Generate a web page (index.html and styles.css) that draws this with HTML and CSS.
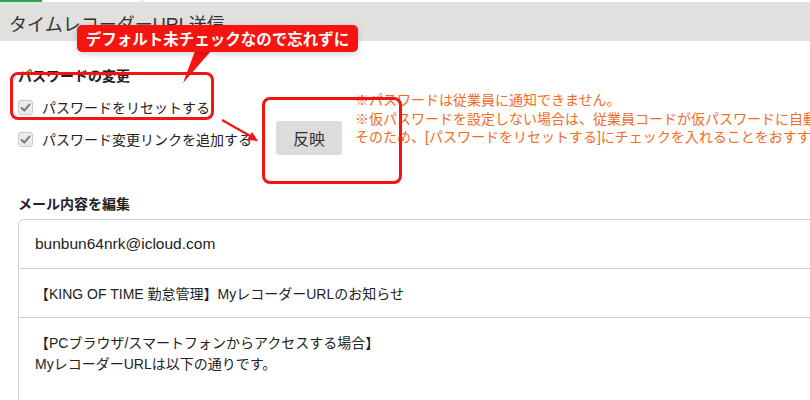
FILE: index.html
```html
<!DOCTYPE html>
<html lang="ja">
<head>
<meta charset="utf-8">
<title>タイムレコーダーURL送信</title>
<link rel="stylesheet" href="styles.css">
</head>
<body>
<div class="page">
  <div class="topstrip"><span class="tab-green"></span><span class="tab-white"></span></div>
  <div class="header"><h1 class="title">タイムレコーダーURL送信</h1></div>
  <div class="content">
    <div class="sec-title">パスワードの変更</div>
    <div class="pw-row">
      <div class="options">
        <label class="opt"><span class="cb"><svg viewBox="0 0 15 15" width="15" height="15"><path d="M3.6 7.9 L6.3 10.6 L11.4 4.6" fill="none" stroke="#7b7b7b" stroke-width="2.1" stroke-linecap="round" stroke-linejoin="round"/></svg></span>パスワードをリセットする</label>
        <label class="opt"><span class="cb"><svg viewBox="0 0 15 15" width="15" height="15"><path d="M3.6 7.9 L6.3 10.6 L11.4 4.6" fill="none" stroke="#7b7b7b" stroke-width="2.1" stroke-linecap="round" stroke-linejoin="round"/></svg></span>パスワード変更リンクを追加する</label>
      </div>
      <button class="btn">反映</button>
      <div class="notes">
        <div>※パスワードは従業員に通知できません。</div>
        <div>※仮パスワードを設定しない場合は、従業員コードが仮パスワードに自動で設定されます。</div>
        <div>そのため、[パスワードをリセットする]にチェックを入れることをおすすめします。</div>
      </div>
    </div>
    <div class="sec-title mail-title">メール内容を編集</div>
    <div class="mailbox">
      <div class="mrow"><span class="latin">bunbun64nrk@icloud.com</span></div>
      <div class="mrow br">【KING OF TIME 勤怠管理】MyレコーダーURLのお知らせ</div>
      <div class="mbody br">【PCブラウザ/スマートフォンからアクセスする場合】<br>MyレコーダーURLは以下の通りです。</div>
    </div>
  </div>

  <div class="redbox box1"></div>
  <div class="redbox box2"></div>
  <svg class="overlay" width="810" height="400" viewBox="0 0 810 400">
    <polygon points="195,51 211,51 183,83" fill="#f5140f"/>
    <line x1="222" y1="120" x2="252" y2="137" stroke="#f5140f" stroke-width="2.2"/>
    <polygon points="258,141 247,140 252,132" fill="#f5140f"/>
  </svg>
  <div class="callout">デフォルト未チェックなので忘れずに</div>
</div>
</body>
</html>
```

FILE: styles.css
```css
html, body {
  margin: 0;
  padding: 0;
  background: #fff;
}
body {
  font-family: "Liberation Sans", "Noto Sans CJK JP", sans-serif;
  color: #333;
  overflow: hidden;
}
.page {
  position: relative;
  width: 810px;
  height: 400px;
  overflow: hidden;
}
.topstrip {
  display: flex;
  height: 2px;
  background: #fff;
}
.tab-green {
  width: 42px;
  background: #2ea44f;
}
.tab-white {
  width: 100px;
  border-right: 1px solid #c8c8c8;
}
.header {
  height: 39px;
  background: #e0e0de;
  display: flex;
  align-items: center;
}
.title {
  margin: 0;
  padding: 2px 0 0 9px;
  font-size: 18px;
  font-weight: normal;
  color: #333;
}
.content {
  padding-left: 18px;
}
.sec-title {
  margin-top: 25px;
  font-size: 14px;
  line-height: 20px;
  font-weight: bold;
  color: #222;
}
.pw-row {
  display: flex;
  align-items: flex-start;
  margin-top: 5px;
}
.options {
  flex: none;
  width: 258px;
  display: flex;
  flex-direction: column;
}
.opt {
  display: flex;
  align-items: center;
  height: 32px;
  font-size: 14px;
  color: #222;
  white-space: nowrap;
}
.cb {
  flex: none;
  width: 15px;
  height: 15px;
  box-sizing: border-box;
  border: 1px solid #c9c9c9;
  border-radius: 3px;
  background: #ececec;
  margin-right: 9px;
  position: relative;
  display: flex;
}
.cb svg {
  position: absolute;
  left: -1px;
  top: -1px;
}
.btn {
  flex: none;
  margin-top: 30px;
  width: 66px;
  height: 34px;
  border: none;
  border-radius: 3px;
  background: #dcdcdc;
  color: #333;
  font-family: "Noto Sans CJK JP", sans-serif;
  font-size: 16px;
  padding: 0;
}
.notes {
  flex: none;
  margin-left: 13px;
  font-size: 14px;
  line-height: 18.5px;
  color: #f36b1f;
  white-space: nowrap;
}
.mail-title {
  margin-top: 39px;
}
.mailbox {
  margin-top: 5px;
  width: 820px;
  border: 1px solid #cfcfcf;
  border-top-left-radius: 6px;
  font-size: 14px;
  color: #222;
}
.mrow {
  height: 48px;
  display: flex;
  align-items: center;
  padding-left: 16px;
  white-space: nowrap;
}
.latin {
  font-size: 15.5px;
}
.br {
  border-top: 1px solid #cfcfcf;
}
.mbody {
  padding: 15px 0 40px 16px;
  line-height: 21px;
  white-space: nowrap;
}
.redbox {
  position: absolute;
  border: 3px solid #f5140f;
  border-radius: 8px;
  box-sizing: border-box;
}
.box1 {
  left: 10px;
  top: 72px;
  width: 204px;
  height: 48px;
}
.box2 {
  left: 262px;
  top: 97px;
  width: 140px;
  height: 87px;
}
.overlay {
  position: absolute;
  left: 0;
  top: 0;
  pointer-events: none;
}
.callout {
  position: absolute;
  left: 77px;
  top: 25px;
  width: 281px;
  height: 27px;
  box-sizing: border-box;
  background: #f5140f;
  border-radius: 5px;
  color: #fff;
  font-family: "Noto Sans CJK JP", sans-serif;
  font-weight: bold;
  font-size: 15.5px;
  line-height: 27px;
  text-align: center;
  box-shadow: 0 2px 6px rgba(0,0,0,0.18);
  white-space: nowrap;
}
```
